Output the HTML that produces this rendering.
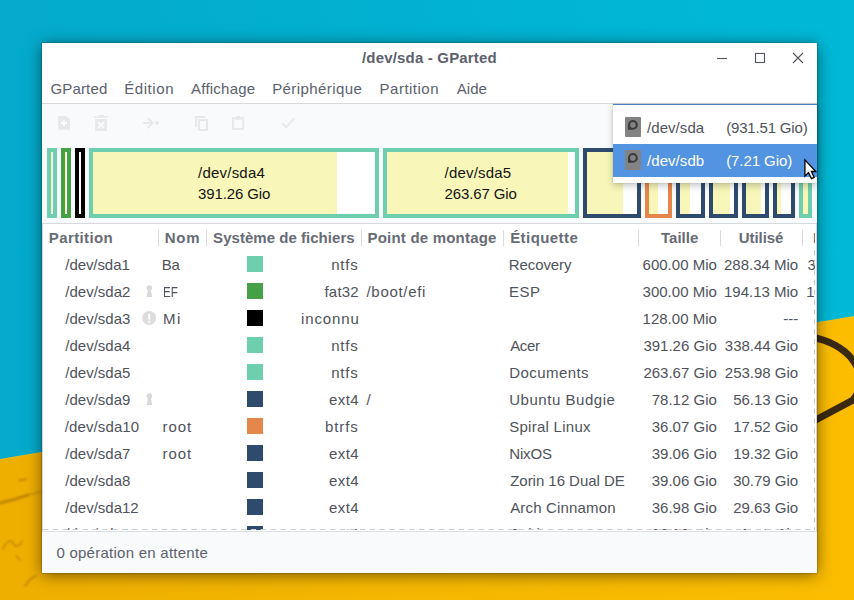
<!DOCTYPE html>
<html><head><meta charset="utf-8">
<style>
*{margin:0;padding:0;box-sizing:border-box}
html,body{width:854px;height:600px;overflow:hidden;background:#05b0ce}
body{position:relative;font-family:"Liberation Sans",sans-serif;font-size:15px;color:#5c616c}
.bg{position:absolute;left:0;top:0}
.win{position:absolute;left:42px;top:43px;width:775px;height:530px;background:#fff;box-shadow:0 2px 15px rgba(0,0,0,.5),0 0 1.5px rgba(0,0,0,.55)}
.t{position:absolute;white-space:pre;line-height:15px;height:15px}
.b{font-weight:bold}
.hl{position:absolute;height:1px;background:#dcdfe3}
.tb{position:absolute;left:0;top:61px;width:775px;height:119px;background:#f9fafb}
.pb{position:absolute;top:105px;height:70px;border:4px solid #6ecfae;background:#fff;overflow:hidden}
.pb i{position:absolute;left:0;top:0;bottom:0;background:#f8f7b9}
.tv{position:absolute;left:1px;top:181px;width:772px;height:306px;overflow:hidden;background:#fff}
.sq{position:absolute;width:16px;height:16px}
.sep{position:absolute;width:1px;height:16px;background:#d9dbde;top:5.5px}
.tv .t{color:#4f535b}
.tv .b{color:#676b75}
.st{position:absolute;left:0;top:488px;width:775px;height:42px;background:#f9fafb;border-top:1px solid #dcdfe3}
.pop{position:absolute;left:613px;top:104px;width:204px;height:79px;background:#fff;border-top:1px solid #4a7cc0;box-shadow:0 3px 7px rgba(0,0,0,.22),0 0 1px rgba(0,0,0,.25)}
.pop .t{color:#4f535b}
.hdd{position:absolute;width:16px;height:20px;background:#838383;border-radius:1px}
</style></head><body>
<svg class="bg" width="854" height="600" viewBox="0 0 854 600">
<defs>
<linearGradient id="yg" x1="0" y1="0" x2="1" y2="0"><stop offset="0" stop-color="#efaf00"/><stop offset=".6" stop-color="#f7b900"/><stop offset="1" stop-color="#fcbd00"/></linearGradient>
<linearGradient id="tg" x1="0" y1="0" x2="1" y2="0"><stop offset="0" stop-color="#04aacb"/><stop offset="1" stop-color="#00b9d7"/></linearGradient>
</defs>
<rect width="854" height="600" fill="url(#tg)"/>
<polygon points="0,459 854,316 854,600 0,600" fill="url(#yg)"/>
<path d="M0 459.5 L854 317" stroke="#c8d060" stroke-width="1" opacity=".35"/>
<path d="M810 337 C 847 342, 874 374, 853 400 L 810 423" fill="none" stroke="#3b2a12" stroke-width="7"/>
<filter id="bl"><feGaussianBlur stdDeviation="0.9"/></filter>
<g fill="none" stroke="#7a4c00" stroke-linecap="round" opacity=".45" filter="url(#bl)">
<path d="M0 503 Q 14 500, 28 495" stroke-width="2.6"/>
<path d="M28 495 L40 492" stroke-width="1.2"/>
<path d="M19 480.5 L26 479" stroke-width="1.6"/>
<path d="M3 549 C 6 541, 11 539, 13 543 C 15 548, 19 547, 22 541" stroke-width="1.3"/>
<path d="M16 556 L20 560" stroke-width="1.2"/>
<path d="M25 586 Q 30 578, 36 576" stroke-width="1.6"/>
</g>
</svg>
<div class="win">
<div class="t b" style="top:7.0px;letter-spacing:0.176px;left:320.0px;">/dev/sda - GParted</div>
<svg style="position:absolute;left:0;top:0" width="775" height="30" viewBox="42 43 775 30">
<line x1="717" y1="58.5" x2="727" y2="58.5" stroke="#50555e" stroke-width="1.1"/>
<rect x="755.5" y="53.5" width="9" height="9" fill="none" stroke="#50555e" stroke-width="1.1"/>
<path d="M793 53 L803 63 M803 53 L793 63" stroke="#50555e" stroke-width="1.1"/>
</svg>
<div class="t" style="top:37.6px;letter-spacing:0.15px;left:8.5px;">GParted</div>
<div class="t" style="top:37.6px;letter-spacing:0.583px;left:82.2px;">Édition</div>
<div class="t" style="top:37.6px;letter-spacing:0.238px;left:149.0px;">Affichage</div>
<div class="t" style="top:37.6px;letter-spacing:0.418px;left:230.2px;">Périphérique</div>
<div class="t" style="top:37.6px;letter-spacing:0.487px;left:337.6px;">Partition</div>
<div class="t" style="top:37.6px;letter-spacing:0.0px;left:414.8px;">Aide</div>
<div class="hl" style="left:0;top:60px;width:775px;background:#d8d9db"></div>
<div class="tb"></div>
<svg style="position:absolute;left:0;top:60px" width="300" height="40" viewBox="42 103 300 40">
<path d="M58.2 116 h7.8 l4 3.5 v10.2 h-11.8 z" fill="#e7e8e9"/>
<path d="M61 123 h6 M64 120 v6" stroke="#f9fafb" stroke-width="2"/>
<path d="M94.1 116.2 h13.9 v1.6 h-13.9 z M98.5 115 h5.5 v1.5 h-5.5 z M95.1 119 h11.9 v12 h-11.9 z" fill="#e7e8e9"/>
<path d="M98.2 122.2 l5.8 5.8 M104 122.2 l-5.8 5.8" stroke="#f9fafb" stroke-width="2"/>
<path d="M143 123 h9.5 M147.6 117.9 l5.1 5.1 l-5.1 5.1" fill="none" stroke="#e7e8e9" stroke-width="2"/>
<circle cx="157.1" cy="123" r="2" fill="#e7e8e9"/>
<path d="M195 116 h10 v2 h-8 v9 h-2 z" fill="#e7e8e9"/>
<rect x="199" y="120" width="8" height="10" fill="none" stroke="#e7e8e9" stroke-width="2"/>
<rect x="232.9" y="117.9" width="10.3" height="11.1" fill="none" stroke="#e7e8e9" stroke-width="1.8"/>
<path d="M235 119.8 h6.4 v-1.6 l-1.3 -1.1 a2 2 0 0 0 -3.8 0 l-1.3 1.1 z" fill="#e7e8e9"/>
<path d="M282.4 123.5 l3.8 3.8 l8 -9" fill="none" stroke="#e7e8e9" stroke-width="2"/>
</svg>
<div class="pb" style="left:5px;width:10px;border-color:#6ecfae"><i style="width:1px"></i></div>
<div class="pb" style="left:19px;width:10px;border-color:#46a046"><i style="width:1px"></i></div>
<div class="pb" style="left:33px;width:10px;border-color:#000"><i style="width:0px"></i></div>
<div class="pb" style="left:47px;width:290px;border-color:#6ecfae"><i style="width:244px"></i></div>
<div class="pb" style="left:341px;width:196px;border-color:#6ecfae"><i style="width:181px"></i></div>
<div class="pb" style="left:541px;width:58px;border-color:#2e4b6e"><i style="width:36px"></i></div>
<div class="pb" style="left:603px;width:27px;border-color:#e5874b"><i style="width:9px"></i></div>
<div class="pb" style="left:634px;width:29px;border-color:#2e4b6e"><i style="width:10px"></i></div>
<div class="pb" style="left:667px;width:29px;border-color:#2e4b6e"><i style="width:17px"></i></div>
<div class="pb" style="left:700px;width:27px;border-color:#2e4b6e"><i style="width:15px"></i></div>
<div class="pb" style="left:731px;width:22px;border-color:#2e4b6e"><i style="width:4px"></i></div>
<div class="pb" style="left:757px;width:13px;border-color:#6ecfae"><i style="width:5px"></i></div>
<div class="t" style="top:122.3px;letter-spacing:0.225px;color:#141414;left:156.0px;">/dev/sda4</div>
<div class="t" style="top:143.3px;letter-spacing:-0.111px;color:#141414;left:156.0px;">391.26 Gio</div>
<div class="t" style="top:122.3px;letter-spacing:0.175px;color:#141414;left:402.6px;">/dev/sda5</div>
<div class="t" style="top:143.3px;letter-spacing:-0.133px;color:#141414;left:402.6px;">263.67 Gio</div>
<div class="hl" style="left:0;top:180px;width:775px;background:#d5d8dc"></div>
<div class="tv">
<div class="t b" style="top:6.4px;letter-spacing:0.388px;left:5.8px;">Partition</div>
<div class="t b" style="top:6.4px;letter-spacing:0.7px;left:121.8px;">Nom</div>
<div class="t b" style="top:6.4px;letter-spacing:0.033px;left:170.1px;">Système de fichiers</div>
<div class="t b" style="top:6.4px;letter-spacing:0.207px;left:324.5px;">Point de montage</div>
<div class="t b" style="top:6.4px;letter-spacing:0.425px;left:467.2px;">Étiquette</div>
<div class="t b" style="top:6.4px;letter-spacing:0.0px;left:618.0px;">Taille</div>
<div class="t b" style="top:6.4px;letter-spacing:-0.067px;left:695.8px;">Utilisé</div>
<div class="t b" style="top:6.4px;letter-spacing:0.15px;left:770.0px;">Inutilisé</div>
<div class="sep" style="left:115px"></div>
<div class="sep" style="left:163px"></div>
<div class="sep" style="left:318px"></div>
<div class="sep" style="left:460px"></div>
<div class="sep" style="left:595px"></div>
<div class="sep" style="left:677px"></div>
<div class="sep" style="left:759px"></div>
<div class="t" style="top:33.3px;letter-spacing:-0.075px;left:22.3px;">/dev/sda1</div>
<div class="t" style="top:33.3px;letter-spacing:-0.2px;left:118.7px;">Ba</div>
<div class="sq" style="left:204px;top:32px;background:#6ecfae"></div>
<div class="t" style="top:33.3px;letter-spacing:0.767px;left:288.2px;">ntfs</div>
<div class="t" style="top:33.3px;letter-spacing:-0.071px;left:465.7px;">Recovery</div>
<div class="t" style="top:33.3px;letter-spacing:0px;right:98.2px;">600.00 Mio</div>
<div class="t" style="top:33.3px;letter-spacing:0px;right:16.8px;">288.34 Mio</div>
<div class="t" style="top:33.3px;letter-spacing:0px;right:-65.5px;">311.66 Mio</div>
<div class="t" style="top:60.3px;letter-spacing:0.0px;left:22.3px;">/dev/sda2</div>
<svg style="position:absolute;left:102.5px;top:61px" width="8" height="13" viewBox="0 0 8 13"><circle cx="3.4" cy="3" r="2.8" fill="#d9d9d9"/><path d="M2.2 4 h2.4 l1.7 8 h-5.8 z" fill="#d9d9d9"/></svg>
<div class="t" style="top:60.3px;letter-spacing:0px;left:120.2px;transform:scaleX(0.778);transform-origin:0 0;">EF</div>
<div class="sq" style="left:204px;top:59px;background:#46a046"></div>
<div class="t" style="top:60.3px;letter-spacing:0.2px;left:281.5px;">fat32</div>
<div class="t" style="top:60.3px;letter-spacing:0.688px;left:323.5px;">/boot/efi</div>
<div class="t" style="top:60.3px;letter-spacing:0.55px;left:466.0px;">ESP</div>
<div class="t" style="top:60.3px;letter-spacing:0px;right:98.2px;">300.00 Mio</div>
<div class="t" style="top:60.3px;letter-spacing:0px;right:16.8px;">194.13 Mio</div>
<div class="t" style="top:60.3px;letter-spacing:0px;right:-65.5px;">105.87 Mio</div>
<div class="t" style="top:87.3px;letter-spacing:0.0px;left:22.3px;">/dev/sda3</div>
<svg style="position:absolute;left:98.80000000000001px;top:87.19999999999999px" width="15" height="15" viewBox="0 0 15 15"><circle cx="7.2" cy="7" r="7" fill="#dcdcdc"/><rect x="6.2" y="3" width="2" height="5.5" fill="#fff"/><rect x="6.2" y="9.6" width="2" height="2" fill="#fff"/></svg>
<div class="t" style="top:87.3px;letter-spacing:1.5px;left:120.0px;">Mi</div>
<div class="sq" style="left:204px;top:86px;background:#000"></div>
<div class="t" style="top:87.3px;letter-spacing:0.883px;left:258.0px;">inconnu</div>
<div class="t" style="top:87.3px;letter-spacing:0px;right:98.2px;">128.00 Mio</div>
<div class="t" style="top:87.3px;letter-spacing:0px;right:16.8px;">---</div>
<div class="t" style="top:114.3px;letter-spacing:0.0px;left:22.3px;">/dev/sda4</div>
<div class="sq" style="left:204px;top:113px;background:#6ecfae"></div>
<div class="t" style="top:114.3px;letter-spacing:0.767px;left:288.2px;">ntfs</div>
<div class="t" style="top:114.3px;letter-spacing:-0.333px;left:467.2px;">Acer</div>
<div class="t" style="top:114.3px;letter-spacing:0px;right:98.2px;">391.26 Gio</div>
<div class="t" style="top:114.3px;letter-spacing:0px;right:16.8px;">338.44 Gio</div>
<div class="t" style="top:141.3px;letter-spacing:0.0px;left:22.3px;">/dev/sda5</div>
<div class="sq" style="left:204px;top:140px;background:#6ecfae"></div>
<div class="t" style="top:141.3px;letter-spacing:0.767px;left:288.2px;">ntfs</div>
<div class="t" style="top:141.3px;letter-spacing:0.438px;left:466.2px;">Documents</div>
<div class="t" style="top:141.3px;letter-spacing:0px;right:98.2px;">263.67 Gio</div>
<div class="t" style="top:141.3px;letter-spacing:0px;right:16.8px;">253.98 Gio</div>
<div class="t" style="top:168.3px;letter-spacing:0.0px;left:22.3px;">/dev/sda9</div>
<svg style="position:absolute;left:102.5px;top:169px" width="8" height="13" viewBox="0 0 8 13"><circle cx="3.4" cy="3" r="2.8" fill="#d9d9d9"/><path d="M2.2 4 h2.4 l1.7 8 h-5.8 z" fill="#d9d9d9"/></svg>
<div class="sq" style="left:204px;top:167px;background:#2e4b6e"></div>
<div class="t" style="top:168.3px;letter-spacing:0.433px;left:286.0px;">ext4</div>
<div class="t" style="top:168.3px;letter-spacing:0px;left:323.5px;">/</div>
<div class="t" style="top:168.3px;letter-spacing:0.542px;left:466.2px;">Ubuntu Budgie</div>
<div class="t" style="top:168.3px;letter-spacing:0px;right:98.2px;">78.12 Gio</div>
<div class="t" style="top:168.3px;letter-spacing:0px;right:16.8px;">56.13 Gio</div>
<div class="t" style="top:195.3px;letter-spacing:0.122px;left:21.7px;">/dev/sda10</div>
<div class="t" style="top:195.3px;letter-spacing:0.967px;left:119.5px;">root</div>
<div class="sq" style="left:204px;top:194px;background:#e5874b"></div>
<div class="t" style="top:195.3px;letter-spacing:0.875px;left:282.0px;">btrfs</div>
<div class="t" style="top:195.3px;letter-spacing:0.273px;left:466.2px;">Spiral Linux</div>
<div class="t" style="top:195.3px;letter-spacing:0px;right:98.2px;">36.07 Gio</div>
<div class="t" style="top:195.3px;letter-spacing:0px;right:16.8px;">17.52 Gio</div>
<div class="t" style="top:222.3px;letter-spacing:0.0px;left:22.3px;">/dev/sda7</div>
<div class="t" style="top:222.3px;letter-spacing:0.967px;left:119.5px;">root</div>
<div class="sq" style="left:204px;top:221px;background:#2e4b6e"></div>
<div class="t" style="top:222.3px;letter-spacing:0.433px;left:286.0px;">ext4</div>
<div class="t" style="top:222.3px;letter-spacing:-0.125px;left:466.2px;">NixOS</div>
<div class="t" style="top:222.3px;letter-spacing:0px;right:98.2px;">39.06 Gio</div>
<div class="t" style="top:222.3px;letter-spacing:0px;right:16.8px;">19.32 Gio</div>
<div class="t" style="top:249.3px;letter-spacing:0.0px;left:22.3px;">/dev/sda8</div>
<div class="sq" style="left:204px;top:248px;background:#2e4b6e"></div>
<div class="t" style="top:249.3px;letter-spacing:0.433px;left:286.0px;">ext4</div>
<div class="t" style="top:249.3px;letter-spacing:-0.033px;left:467.2px;">Zorin 16 Dual DE</div>
<div class="t" style="top:249.3px;letter-spacing:0px;right:98.2px;">39.06 Gio</div>
<div class="t" style="top:249.3px;letter-spacing:0px;right:16.8px;">30.79 Gio</div>
<div class="t" style="top:276.3px;letter-spacing:0.0px;left:22.3px;">/dev/sda12</div>
<div class="sq" style="left:204px;top:275px;background:#2e4b6e"></div>
<div class="t" style="top:276.3px;letter-spacing:0.433px;left:286.0px;">ext4</div>
<div class="t" style="top:276.3px;letter-spacing:0.167px;left:467.2px;">Arch Cinnamon</div>
<div class="t" style="top:276.3px;letter-spacing:0px;right:98.2px;">36.98 Gio</div>
<div class="t" style="top:276.3px;letter-spacing:0px;right:16.8px;">29.63 Gio</div>
<div class="t" style="top:302.3px;letter-spacing:0.0px;left:22.3px;">/dev/sda11</div>
<div class="sq" style="left:204px;top:302px;background:#2e4b6e"></div>
<div class="t" style="top:302.3px;letter-spacing:0.433px;left:286.0px;">ext4</div>
<div class="t" style="top:302.3px;letter-spacing:-0.1px;left:466.2px;">Debian</div>
<div class="t" style="top:302.3px;letter-spacing:0px;right:98.2px;">36.98 Gio</div>
<div class="t" style="top:302.3px;letter-spacing:0px;right:16.8px;">9.16 Gio</div>
<svg style="position:absolute;left:0;top:0" width="772" height="306">
<line x1="0" y1="305.5" x2="772" y2="305.5" stroke="#c9ccd0" stroke-dasharray="5.3 4.6"/>
<line x1="771.5" y1="26" x2="771.5" y2="306" stroke="#c9ccd0" stroke-dasharray="5.3 4.6"/>
</svg>
</div>
<div class="st"></div>
<div style="position:absolute;left:0;top:180px;width:1px;height:308px;background:#d5d6d8"></div><div style="position:absolute;left:774px;top:180px;width:1px;height:308px;background:#d5d6d8"></div>
<div class="t" style="top:502.2px;letter-spacing:0.257px;left:14.4px;">0 opération en attente</div>
</div>
<div class="pop">
<div style="position:absolute;left:0;top:39px;width:204px;height:33px;background:#5294e2"></div>
<div class="hdd" style="left:12px;top:12px"><svg width="16" height="20" viewBox="0 0 16 20" style="position:absolute;left:0;top:0"><path fill-rule="evenodd" d="M3 7.9 A4.9 4.9 0 1 1 7.9 12.8 L3 12.8 Z M5.1 7.9 A2.8 2.8 0 1 0 10.7 7.9 A2.8 2.8 0 1 0 5.1 7.9 Z" fill="#3a3a3a"/></svg></div>
<div class="t" style="top:15.3px;letter-spacing:0.06px;left:34.0px;">/dev/sda</div>
<div class="t" style="top:15.3px;letter-spacing:-0.173px;left:113.2px;">(931.51 Gio)</div>
<div class="hdd" style="left:12px;top:45px"><svg width="16" height="20" viewBox="0 0 16 20" style="position:absolute;left:0;top:0"><path fill-rule="evenodd" d="M3 7.9 A4.9 4.9 0 1 1 7.9 12.8 L3 12.8 Z M5.1 7.9 A2.8 2.8 0 1 0 10.7 7.9 A2.8 2.8 0 1 0 5.1 7.9 Z" fill="#3a3a3a"/></svg></div>
<div class="t" style="top:48.3px;letter-spacing:0.06px;color:#fff;left:34.0px;">/dev/sdb</div>
<div class="t" style="top:48.3px;letter-spacing:-0.078px;color:#fff;left:113.2px;">(7.21 Gio)</div>
</div>
<svg style="position:absolute;left:803px;top:158px" width="18" height="26" viewBox="0 0 18 26">
<path d="M1.9 1.9 L1.9 18.2 L5.5 14.6 L8.5 20.6 L11.2 19.4 L8.4 13.5 L12.8 13.5 Z" fill="#fff" stroke="#000" stroke-width="1.3" stroke-linejoin="miter"/>
</svg>
</body></html>
